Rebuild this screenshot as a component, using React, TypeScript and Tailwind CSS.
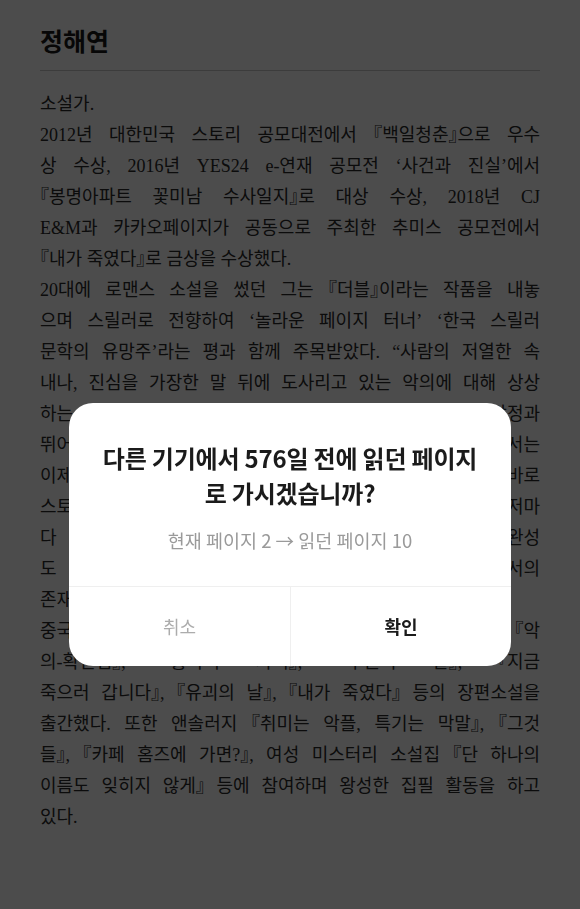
const bodyFont = {
  fontFamily: '"Liberation Serif", "Noto Sans CJK KR", serif',
};

const paragraphs: string[][] = [
  ['소설가.'],
  [
    '2012년 대한민국 스토리 공모대전에서 『백일청춘』으로 우수',
    '상 수상, 2016년 YES24 e-연재 공모전 ‘사건과 진실’에서',
    '『봉명아파트 꽃미남 수사일지』로 대상 수상, 2018년 CJ',
    'E&M과 카카오페이지가 공동으로 주최한 추미스 공모전에서',
    '『내가 죽였다』로 금상을 수상했다.',
  ],
  [
    '20대에 로맨스 소설을 썼던 그는 『더블』이라는 작품을 내놓',
    '으며 스릴러로 전향하여 ‘놀라운 페이지 터너’ ‘한국 스릴러',
    '문학의 유망주’라는 평과 함께 주목받았다. “사람의 저열한 속',
    '내나, 진심을 가장한 말 뒤에 도사리고 있는 악의에 대해 상상',
    '하는 것을 좋아한다”는 그는 인물의 심리와 복잡한 감정과',
    '뛰어난 가독성으로 독자를 사로잡는 그의 작품 속에서는',
    '이제 막 시작된 이야기가 어디로 흘러갈지 알 수 없는 바로',
    '스토리의 긴장감이 끝까지 이어지며, 인물들은 저마',
    '다 자신만의 사연을 품고 있으며, 이를 촘촘히 엮어낸 완성',
    '도 높은 이야기는 장르 독자들에게 한국 스릴러 작가로서의',
    '존재감을 확실히 각인시켰다.',
  ],
  [
    '중국, 일본, 대만 등 해외에 판권을 수출한 『홍학의 자리』, 『악',
    '의-확신범』, 『홍학의 자리』, 『구원의 날』, 『지금',
    '죽으러 갑니다』, 『유괴의 날』, 『내가 죽였다』 등의 장편소설을',
    '출간했다. 또한 앤솔러지 『취미는 악플, 특기는 막말』, 『그것',
    '들』, 『카페 홈즈에 가면?』, 여성 미스터리 소설집 『단 하나의',
    '이름도 잊히지 않게』 등에 참여하며 왕성한 집필 활동을 하고',
    '있다.',
  ],
];

// justify only at the spaces: each word is kept whole
function Line({ text, justify }: { text: string; justify: boolean }) {
  const words = text.split(' ');
  return (
    <span
      className={
        justify ? 'block text-justify [text-align-last:justify]' : 'block text-left'
      }
    >
      {words.map((word, i) => (
        <span key={i}>
          <span className="inline-block">{word}</span>
          {i < words.length - 1 ? ' ' : null}
        </span>
      ))}
    </span>
  );
}

function Paragraph({ lines }: { lines: string[] }) {
  return (
    <div>
      {lines.map((line, i) => (
        <Line key={i} text={line} justify={i !== lines.length - 1} />
      ))}
    </div>
  );
}

function ResumeDialog() {
  return (
    <div
      className="fixed inset-0 flex items-start justify-center px-[69px] pt-[403px]"
      style={{ fontFamily: '"Noto Sans CJK KR", sans-serif' }}
    >
      <div className="w-full overflow-hidden rounded-[24px] bg-white">
        <div className="flex flex-col items-center px-4 pt-[37px] pb-[34px] text-center">
          <p className="text-[24px] leading-[35px] font-bold tracking-[-0.2px] text-[#1b1b1b]">
            다른 기기에서 576일 전에 읽던 페이지
            <br />로 가시겠습니까?
          </p>
          <p className="mt-[18px] text-[18.5px] leading-[24px] text-[#9a9a9a]">
            현재 페이지 2 → 읽던 페이지 10
          </p>
        </div>
        <div className="grid grid-cols-2 border-t border-[#efefef]">
          <button className="h-[79px] text-[18px] text-[#acacac]">취소</button>
          <button className="h-[79px] border-l border-[#efefef] text-[18px] font-bold text-[#1b1b1b]">
            확인
          </button>
        </div>
      </div>
    </div>
  );
}

export default function App() {
  return (
    <div className="relative min-h-[909px] bg-white">
      <div className="px-[40px] pt-[26px] pb-10" style={bodyFont}>
        <h1 className="text-[25px] leading-[34px] font-bold text-[#1a1a1a]">정해연</h1>
        <div className="mt-[10px] border-t border-[#c8c8c8]" />
        <div className="mt-[18px] text-[18px] leading-[31px] text-[#2a2a2a] [font-feature-settings:'halt']">
          {paragraphs.map((lines, i) => (
            <Paragraph key={i} lines={lines} />
          ))}
        </div>
      </div>
      <div className="fixed inset-0 bg-black/70" />
      <ResumeDialog />
    </div>
  );
}
